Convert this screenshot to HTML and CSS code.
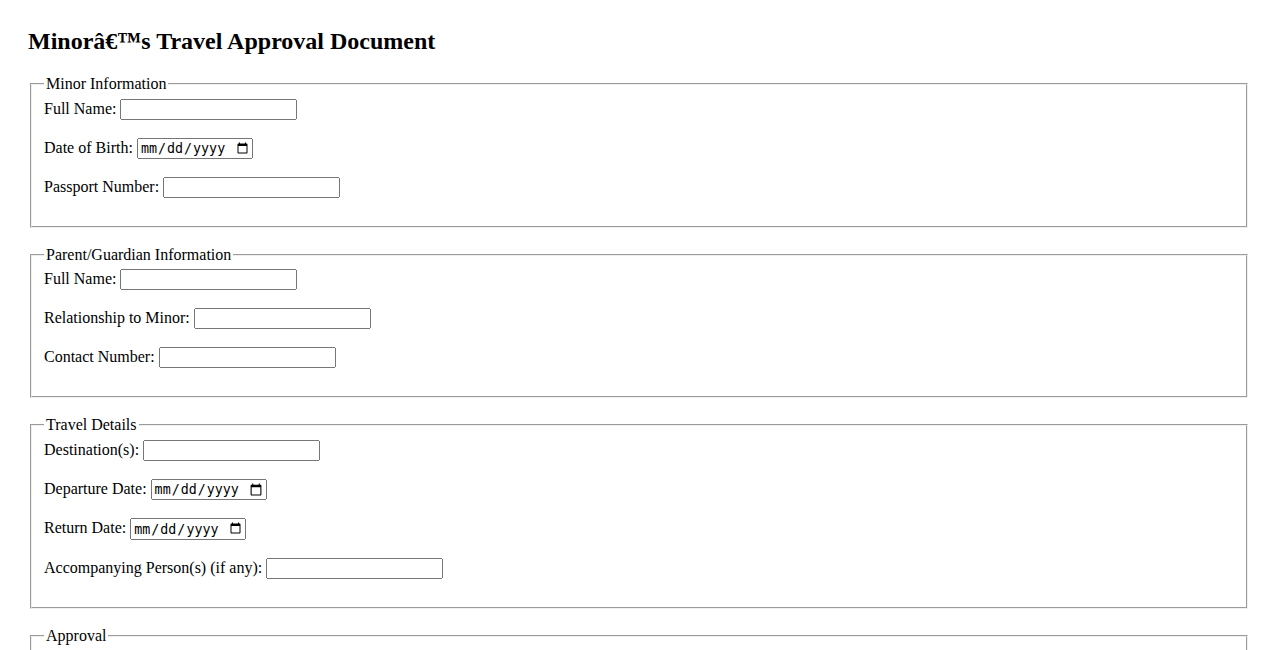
FILE: index.html
```html
<!DOCTYPE html>
<html>
<head>
  <meta charset="utf-8">
  <title>Minor's Travel Approval Document</title>
  <link rel="stylesheet" href="styles.css">
</head>

<body>
  <h2 class="title">Minorâ€™s Travel Approval Document</h2>

  <form class="approval-form">
    <fieldset class="section">
      <legend>Minor Information</legend>
      <label for="minor-name">Full Name:</label>
      <input type="text" id="minor-name" name="minor-name"><br><br>
      <label for="minor-dob">Date of Birth:</label>
      <input type="date" id="minor-dob" name="minor-dob"><br><br>
      <label for="minor-passport">Passport Number:</label>
      <input type="text" id="minor-passport" name="minor-passport"><br><br>
    </fieldset>

    <fieldset class="section">
      <legend>Parent/Guardian Information</legend>
      <label for="parent-name">Full Name:</label>
      <input type="text" id="parent-name" name="parent-name"><br><br>
      <label for="parent-relationship">Relationship to Minor:</label>
      <input type="text" id="parent-relationship" name="parent-relationship"><br><br>
      <label for="parent-contact">Contact Number:</label>
      <input type="text" id="parent-contact" name="parent-contact"><br><br>
    </fieldset>

    <fieldset class="section">
      <legend>Travel Details</legend>
      <label for="destination">Destination(s):</label>
      <input type="text" id="destination" name="destination"><br><br>
      <label for="departure">Departure Date:</label>
      <input type="date" id="departure" name="departure"><br><br>
      <label for="return">Return Date:</label>
      <input type="date" id="return" name="return"><br><br>
      <label for="companion">Accompanying Person(s) (if any):</label>
      <input type="text" id="companion" name="companion"><br><br>
    </fieldset>

    <fieldset class="section">
      <legend>Approval</legend>
      <label for="signature">Parent/Guardian Signature:</label>
      <input type="text" id="signature" name="signature"><br><br>
      <label for="sign-date">Date:</label>
      <input type="date" id="sign-date" name="sign-date"><br><br>
    </fieldset>
  </form>
</body>
</html>
```

FILE: styles.css
```css
body {
  font-family: "Liberation Serif", serif;
  padding: 20px;
}

.title {
  margin-top: 0;
}

.section {
  margin-bottom: 18px;
}

input[type="text"] {
  box-sizing: border-box;
  width: 177px;
}

input[type="date"] {
  box-sizing: border-box;
  width: 116px;
}
```
